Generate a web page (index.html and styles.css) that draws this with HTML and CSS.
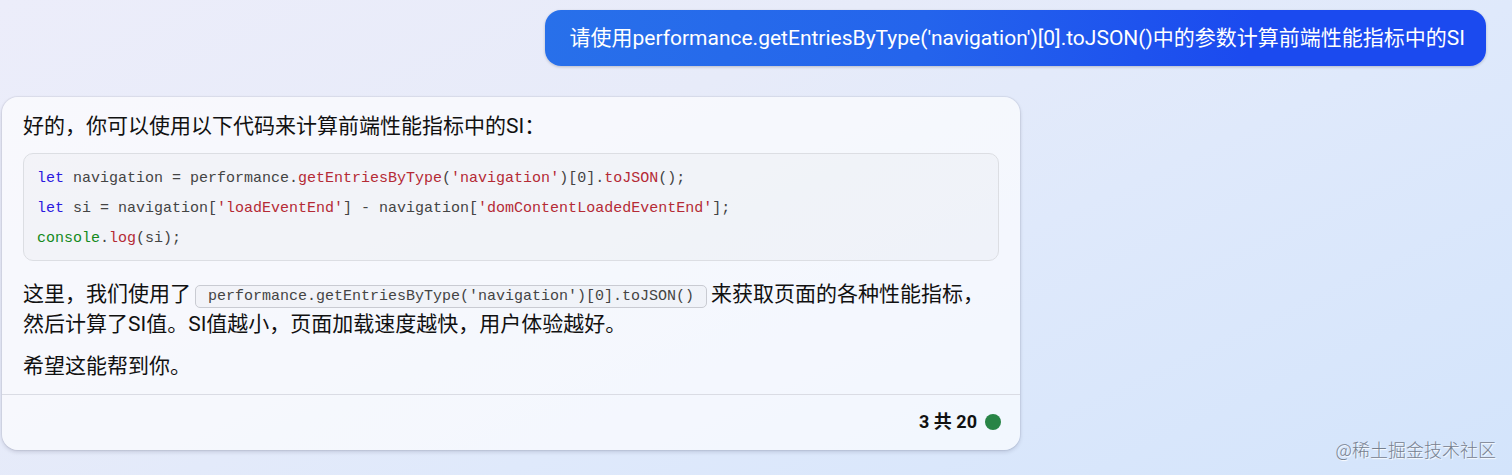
FILE: index.html
```html
<!DOCTYPE html>
<html lang="zh-CN">
<head>
  <meta charset="UTF-8">
  <meta name="viewport" content="width=device-width, initial-scale=1.0">
  <title>聊天</title>
  <link rel="stylesheet" href="styles.css">
</head>
<body>
  <main class="chat">
    <div class="message user">请使用performance.getEntriesByType('navigation')[0].toJSON()中的参数计算前端性能指标中的SI</div>

    <article class="message bot">
      <div class="content">
        <p>好的，你可以使用以下代码来计算前端性能指标中的SI：</p>
        <pre><code><span class="keyword">let</span> navigation = performance.<span class="fn">getEntriesByType</span>(<span class="string">'navigation'</span>)[0].<span class="fn">toJSON</span>();
<span class="keyword">let</span> si = navigation[<span class="string">'loadEventEnd'</span>] - navigation[<span class="string">'domContentLoadedEventEnd'</span>];
<span class="builtin">console</span>.<span class="fn">log</span>(si);</code></pre>
        <p>这里，我们使用了<code class="inline">performance.getEntriesByType('navigation')[0].toJSON()</code>来获取页面的各种性能指标，然后计算了SI值。SI值越小，页面加载速度越快，用户体验越好。</p>
        <p>希望这能帮到你。</p>
      </div>
      <footer class="turns">
        <span>3 共 20</span>
        <span class="dot"></span>
      </footer>
    </article>
  </main>
  <div class="watermark">@稀土掘金技术社区</div>
</body>
</html>
```
FILE: styles.css
```css
* {
  box-sizing: border-box;
}

body {
  margin: 0;
  min-height: 100vh;
  position: relative;
  font-family: Roboto, "Noto Sans CJK SC", sans-serif;
  font-size: 21px;
  line-height: 30px;
  color: #111;
  background: linear-gradient(155deg, #ecedfa 0%, #e7ebf9 35%, #dfe9fb 60%, #d3e4fb 100%);
}

.chat {
  display: flex;
  flex-direction: column;
  gap: 31px;
  padding: 10px 26px 24px 2px;
}

.message {
  border-radius: 16px;
}

.user {
  align-self: flex-end;
  padding: 13px 21px 13px 24px;
  color: #fff;
  background: linear-gradient(100deg, #2870ea 0%, #2464ec 40%, #1b4aef 75%, #1b4aef 100%);
  box-shadow: 0 1px 3px rgba(0, 0, 0, 0.2);
}

.bot {
  width: 100%;
  max-width: 1018px;
  background: rgba(255, 255, 255, 0.65);
  box-shadow: 0 0 1px 1px rgba(0, 0, 40, 0.06), 0 2px 4px rgba(0, 0, 40, 0.14);
}

.content {
  padding: 14px 21px 13px;
}

.content p {
  margin: 0 0 12px;
}

.content p:last-child {
  margin-bottom: 0;
}

code {
  font-family: "Liberation Mono", monospace;
  font-size: 15px;
  color: #444;
}

pre {
  margin: 0 0 18px;
  padding: 10px 13px 6px;
  border: 1px solid #dcdee3;
  border-radius: 10px;
  background: rgba(0, 0, 0, 0.02);
  line-height: 30px;
  overflow-x: auto;
}

pre code {
  display: block;
}

.inline {
  margin: 0 4px;
  padding: 2px 12px;
  border: 1px solid #c9cbd2;
  border-radius: 5px;
  background: rgba(0, 0, 0, 0.02);
  line-height: 16px;
  vertical-align: 1px;
}

.keyword {
  color: #2a18e0;
}

.fn,
.string {
  color: #b52a35;
}

.builtin {
  color: #148a1c;
}

.turns {
  display: flex;
  justify-content: flex-end;
  align-items: center;
  gap: 8px;
  padding: 12px 19px 13px;
  border-top: 1px solid #dadce4;
  font-size: 18px;
  font-weight: bold;
}

.dot {
  width: 16px;
  height: 16px;
  border-radius: 50%;
  background: #288446;
}

.watermark {
  position: absolute;
  right: 16px;
  bottom: 16px;
  font-family: "Noto Sans CJK SC", sans-serif;
  font-size: 18px;
  font-weight: 300;
  line-height: 20px;
  color: #76808f;
  text-shadow: 1px 1px 1px #fff;
}
```
